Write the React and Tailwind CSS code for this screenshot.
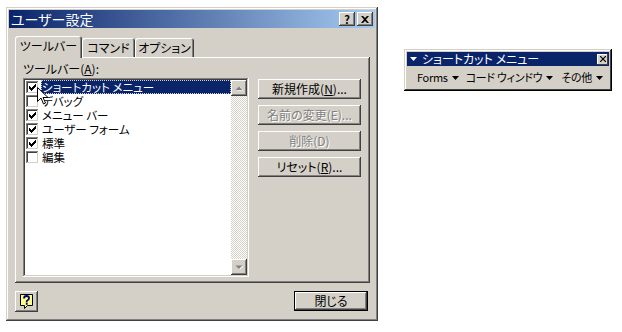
import React from "react";

const raised =
  "shadow-[inset_-1px_-1px_#404040,inset_1px_1px_#ffffff,inset_-2px_-2px_#808080,inset_2px_2px_#d4d0c8]";
const sunken =
  "shadow-[inset_-1px_-1px_#ffffff,inset_1px_1px_#808080,inset_-2px_-2px_#d4d0c8,inset_2px_2px_#404040]";
const dither =
  "bg-[repeating-conic-gradient(#d4d0c8_0_25%,#ffffff_0_50%)] bg-[length:2px_2px]";

const items = [
  { label: "ショートカット メニュー", checked: true, selected: true },
  { label: "デバッグ", checked: false },
  { label: "メニュー バー", checked: true },
  { label: "ユーザー フォーム", checked: true },
  { label: "標準", checked: true },
  { label: "編集", checked: false },
];

function Check({ checked }) {
  return (
    <div className={`w-[13px] h-[13px] bg-white shrink-0 flex items-center justify-center ${sunken}`}>
      {checked && (
        <svg width="7" height="7" viewBox="0 0 7 7">
          <path d="M0 2h1v1h1v1h1v-1h1v-1h1v-1h1v-1h1v3h-1v1h-1v1h-1v1h-1v1h-1v-1h-1v-1h-1v-1h-1z" fill="#000" />
        </svg>
      )}
    </div>
  );
}

function Arrow({ up }) {
  return (
    <div className={`w-[16px] h-[16px] bg-[#d4d0c8] flex items-center justify-center ${raised}`}>
      <svg width="8" height="5" viewBox="0 0 8 5">
        {up ? (
          <>
            <path d="M1.5 4.5h7l-3.5-3.5z" fill="#ffffff" />
            <path d="M0.5 4h7l-3.5-3.5z" fill="#808080" />
          </>
        ) : (
          <>
            <path d="M1.5 1h7l-3.5 3.5z" fill="#ffffff" />
            <path d="M0.5 0.5h7l-3.5 3.5z" fill="#808080" />
          </>
        )}
      </svg>
    </div>
  );
}

function Btn({ children, disabled }) {
  return (
    <div
      className={`w-[103px] h-[20px] bg-[#d4d0c8] flex items-center justify-center whitespace-nowrap text-[12px] leading-[14px] ${raised} ${
        disabled ? "text-[#808080] [text-shadow:1px_1px_0_#ffffff]" : "text-black"
      }`}
    >
      {children}
    </div>
  );
}

function Caret({ color = "#000" }) {
  return (
    <svg width="7" height="4" viewBox="0 0 7 4" className="ml-[4px] mt-[2px] shrink-0">
      <path d="M0 0h7l-3.5 4z" fill={color} />
    </svg>
  );
}

export default function App() {
  return (
    <div className="w-[622px] h-[332px] bg-white flex items-start font-['Noto_Sans_CJK_JP',sans-serif] [font-feature-settings:'palt'] text-black overflow-hidden">
      {/* Dialog */}
      <div className="ml-[6px] mt-[7px] w-[372px] h-[314px] shrink-0 bg-[#d4d0c8] p-[3px] flex flex-col shadow-[inset_-1px_-1px_#404040,inset_1px_1px_#d4d0c8,inset_-2px_-2px_#808080,inset_2px_2px_#ffffff]">
        <div className="h-[18px] bg-[linear-gradient(90deg,#0a246a,#a6caf0)] flex items-center justify-between pl-[2px] pr-[2px]">
          <span className="text-white text-[14px] leading-[16px]">ユーザー設定</span>
          <div className="flex gap-[2px]">
            <div className={`w-[16px] h-[14px] bg-[#d4d0c8] flex items-center justify-center text-[11px] font-bold leading-none ${raised}`}>
              ?
            </div>
            <div className={`w-[16px] h-[14px] bg-[#d4d0c8] flex items-center justify-center ${raised}`}>
              <svg width="8" height="7" viewBox="0 0 8 7">
                <path d="M0 0h2l2 2l2-2h2l-3 3.5l3 3.5h-2l-2-2l-2 2h-2l3-3.5z" fill="#000" />
              </svg>
            </div>
          </div>
        </div>

        {/* Tabs */}
        <div className="pt-[8px] pl-[6px] flex items-end h-[29px] text-[12px] leading-[14px]">
          <div className="relative z-10 -mb-[1px] w-[67px] h-[22px] bg-[#d4d0c8] rounded-t-[3px] flex items-center justify-center pb-[2px] shadow-[inset_1px_1px_#ffffff,inset_-1px_0_#404040,inset_-2px_0_#808080]">
            ツールバー
          </div>
          <div className="w-[53px] h-[19px] bg-[#d4d0c8] rounded-t-[3px] flex items-center justify-center shadow-[inset_1px_1px_#ffffff,inset_-1px_0_#404040,inset_-2px_0_#808080]">
            コマンド
          </div>
          <div className="w-[59px] h-[19px] bg-[#d4d0c8] rounded-t-[3px] flex items-center justify-center shadow-[inset_1px_1px_#ffffff,inset_-1px_0_#404040,inset_-2px_0_#808080]">
            オプション
          </div>
        </div>

        {/* Panel */}
        <div className="ml-[6px] w-[355px] h-[226px] pt-[5px] pl-[8px] shadow-[inset_-1px_-1px_#404040,inset_1px_1px_#ffffff,inset_-2px_-2px_#808080]">
          <div className="h-[16px] text-[12px] leading-[14px]">
            ツールバー(<span className="underline">A</span>):
          </div>
          <div className="flex items-start">
            <div className={`relative w-[226px] h-[199px] bg-white p-[2px] flex ${sunken}`}>
              <div className="flex-1 flex flex-col">
                {items.map((it) => (
                  <div key={it.label} className="h-[14px] flex items-center pl-[1px]">
                    <Check checked={it.checked} />
                    <div
                      className={`ml-[2px] h-[14px] flex items-center pl-[1px] whitespace-nowrap text-[11.5px] leading-[12px] ${
                        it.selected
                          ? "flex-1 bg-[#0a246a] text-white outline-1 outline-dotted outline-[#d4d0c8] -outline-offset-1"
                          : ""
                      }`}
                    >
                      {it.label}
                    </div>
                  </div>
                ))}
              </div>
              <div className={`w-[16px] flex flex-col justify-between ${dither}`}>
                <Arrow up />
                <Arrow />
              </div>
              {/* mouse pointer */}
              <svg className="absolute left-[14px] top-[9px]" width="11" height="18" viewBox="0 0 11 18">
                <path d="M0.5 0.5v14l3.5-3.5l2.5 6l2-1l-2.5-5.5h5z" fill="#ffffff" stroke="#000" strokeWidth="1" />
              </svg>
            </div>
            <div className="ml-[9px] mt-[1px] flex flex-col gap-[6px]">
              <Btn>
                新規作成(<span className="underline">N</span>)...
              </Btn>
              <Btn disabled>名前の変更(E)...</Btn>
              <Btn disabled>削除(D)</Btn>
              <Btn>
                リセット(<span className="underline">R</span>)...
              </Btn>
            </div>
          </div>
        </div>

        {/* Bottom */}
        <div className="mt-[8px] pl-[6px] pr-[7px] flex justify-between items-start">
          <div className={`w-[23px] h-[21px] bg-[#d4d0c8] flex items-center justify-center ${raised}`}>
            <svg width="16" height="17" viewBox="0 0 16 17">
              <path d="M1.5 1.5h12v11h-5l-3 3v-3h-4z" fill="#ffff80" stroke="#000" strokeWidth="1" />
              <path d="M5 5.5q0-2.5 2.5-2.5q2.5 0 2.5 2.2q0 1.3-1.5 2q-0.8 0.4-0.8 1.6v0.7" fill="none" stroke="#000080" strokeWidth="1.8" />
              <rect x="6.8" y="10" width="1.8" height="1.8" fill="#000080" />
            </svg>
          </div>
          <div className="w-[74px] h-[20px] bg-[#d4d0c8] flex items-center justify-center text-[12px] leading-[14px] shadow-[inset_-1px_-1px_#000000,inset_1px_1px_#000000,inset_-2px_-2px_#404040,inset_2px_2px_#ffffff,inset_-3px_-3px_#808080]">
            閉じる
          </div>
        </div>
      </div>

      {/* Floating toolbar */}
      <div className="ml-[26px] mt-[49px] w-[208px] h-[42px] shrink-0 bg-[#d4d0c8] p-[3px] flex flex-col shadow-[inset_-1px_-1px_#000000,inset_1px_1px_#d4d0c8,inset_-2px_-2px_#404040,inset_2px_2px_#ffffff]">
        <div className="h-[14px] bg-[#0a246a] flex items-center justify-between pl-[3px] pr-[1px]">
          <div className="flex items-center whitespace-nowrap text-white text-[12px] leading-[14px]">
            <svg width="7" height="4" viewBox="0 0 7 4" className="mr-[5px]">
              <path d="M0 0h7l-3.5 4z" fill="#ffffff" />
            </svg>
            ショートカット メニュー
          </div>
          <div className="w-[11px] h-[11px] bg-[#d4d0c8] flex items-center justify-center shadow-[inset_-1px_-1px_#404040,inset_1px_1px_#ffffff]">
            <svg width="6" height="6" viewBox="0 0 6 6">
              <path d="M0 0l6 6M6 0l-6 6" stroke="#000" strokeWidth="1.2" />
            </svg>
          </div>
        </div>
        <div className="flex-1 flex items-center pl-[10px] whitespace-nowrap text-[11px] leading-[13px] tracking-[-0.3px]">
          <span className="flex items-center shrink-0">
            Forms
            <Caret />
          </span>
          <span className="flex items-center shrink-0 ml-[7px]">
            コード&nbsp;ウィンドウ
            <Caret />
          </span>
          <span className="flex items-center shrink-0 ml-[8px]">
            その他
            <Caret />
          </span>
        </div>
      </div>
    </div>
  );
}
